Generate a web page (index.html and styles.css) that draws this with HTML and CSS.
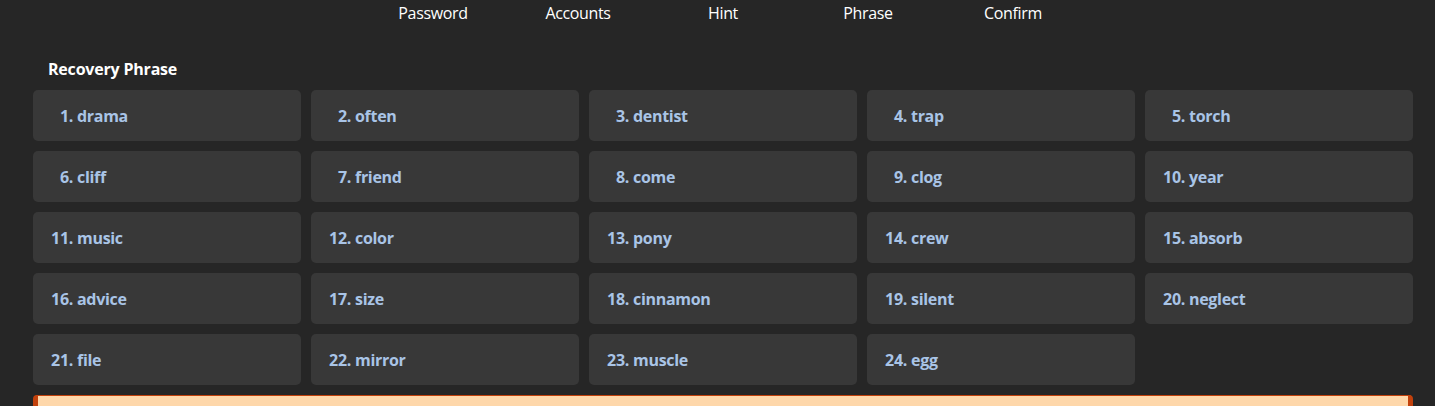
FILE: index.html
```html
<!DOCTYPE html>
<html lang="en">
<head>
<meta charset="utf-8">
<title>Recovery Phrase</title>
<link rel="stylesheet" href="styles.css">
</head>
<body>
<div class="page">
  <nav class="steps">
    <span class="step">Password</span>
    <span class="step">Accounts</span>
    <span class="step">Hint</span>
    <span class="step">Phrase</span>
    <span class="step">Confirm</span>
  </nav>
  <h2 class="title">Recovery Phrase</h2>
  <div class="grid">
    <div class="word"><span class="num">1.</span> drama</div>
    <div class="word"><span class="num">2.</span> often</div>
    <div class="word"><span class="num">3.</span> dentist</div>
    <div class="word"><span class="num">4.</span> trap</div>
    <div class="word"><span class="num">5.</span> torch</div>
    <div class="word"><span class="num">6.</span> cliff</div>
    <div class="word"><span class="num">7.</span> friend</div>
    <div class="word"><span class="num">8.</span> come</div>
    <div class="word"><span class="num">9.</span> clog</div>
    <div class="word"><span class="num">10.</span> year</div>
    <div class="word"><span class="num">11.</span> music</div>
    <div class="word"><span class="num">12.</span> color</div>
    <div class="word"><span class="num">13.</span> pony</div>
    <div class="word"><span class="num">14.</span> crew</div>
    <div class="word"><span class="num">15.</span> absorb</div>
    <div class="word"><span class="num">16.</span> advice</div>
    <div class="word"><span class="num">17.</span> size</div>
    <div class="word"><span class="num">18.</span> cinnamon</div>
    <div class="word"><span class="num">19.</span> silent</div>
    <div class="word"><span class="num">20.</span> neglect</div>
    <div class="word"><span class="num">21.</span> file</div>
    <div class="word"><span class="num">22.</span> mirror</div>
    <div class="word"><span class="num">23.</span> muscle</div>
    <div class="word"><span class="num">24.</span> egg</div>
  </div>
  <div class="warning"></div>
</div>
</body>
</html>
```
FILE: styles.css
```css
html, body {
  margin: 0;
  padding: 0;
  background: #262626;
  height: 100%;
  overflow: hidden;
}
body {
  font-family: "Open Sans", "Noto Sans", sans-serif;
  color: #ffffff;
}
.page {
  padding: 0 22px 0 33px;
}
.steps {
  display: flex;
  justify-content: center;
  height: 26px;
  align-items: center;
}
.step {
  width: 145px;
  text-align: center;
  font-size: 16px;
  letter-spacing: -0.35px;
  color: #ffffff;
}
.title {
  margin: 0 0 10px 0;
  padding: 33px 0 1px 15px;
  font-size: 16px;
  font-weight: 700;
  line-height: 20px;
  letter-spacing: -0.2px;
}
.grid {
  display: grid;
  grid-template-columns: repeat(5, 268px);
  grid-auto-rows: 51px;
  gap: 10px;
}
.word {
  background: #383838;
  border-radius: 5px;
  display: flex;
  align-items: center;
  padding-left: 16px;
  font-size: 16px;
  font-weight: 700;
  letter-spacing: -0.3px;
  color: #a9c4e6;
}
.num {
  display: inline-block;
  min-width: 24px;
  text-align: right;
  margin-right: 4px;
}
.warning {
  margin-top: 10px;
  width: 1370px;
  height: 40px;
  background: #fed7aa;
  border-top: 1px solid #c2410c;
  border-left: 5px solid #c2410c;
  border-right: 5px solid #c2410c;
  border-radius: 4px 4px 0 0;
}
```
